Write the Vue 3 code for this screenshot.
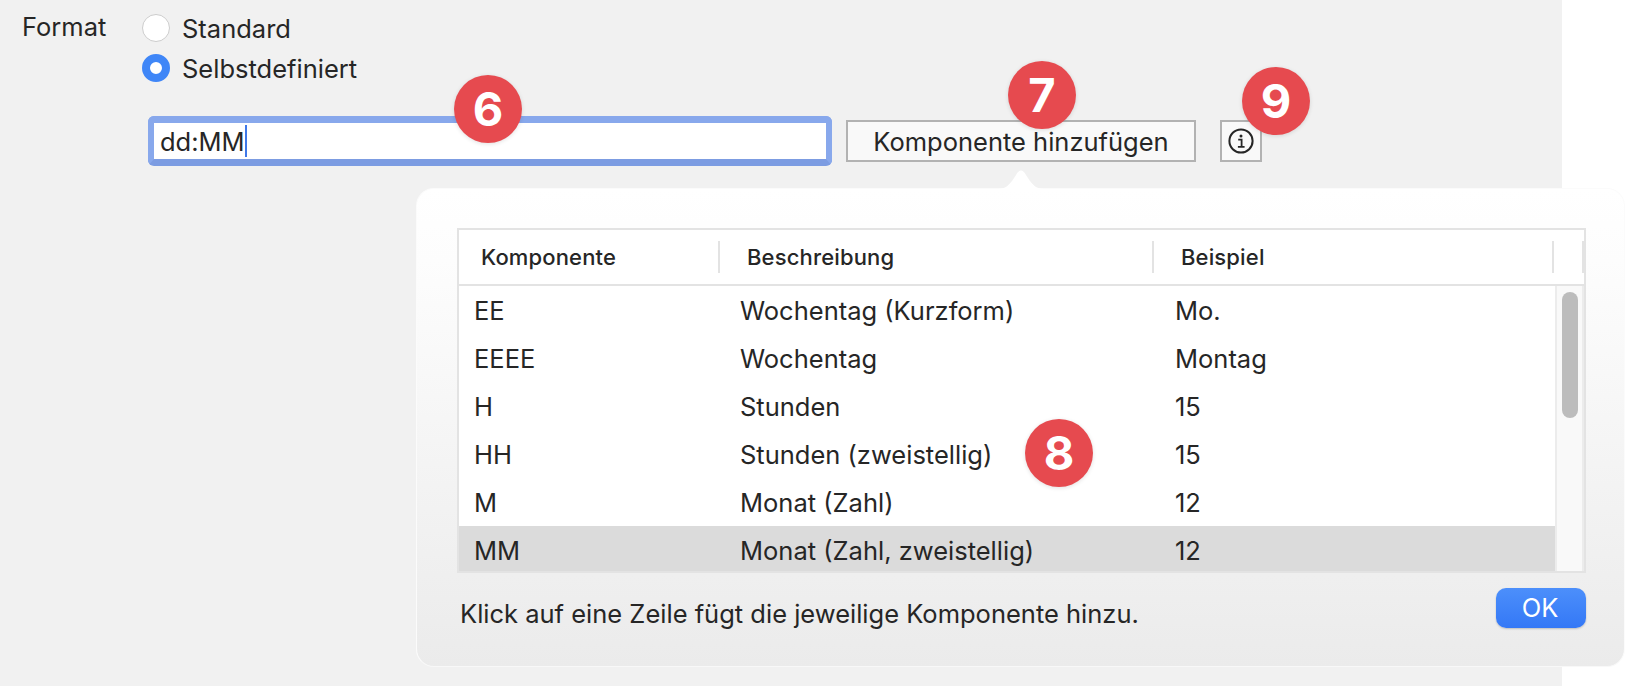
<script setup>
const rows = [
  { k: 'EE', d: 'Wochentag (Kurzform)', e: 'Mo.' },
  { k: 'EEEE', d: 'Wochentag', e: 'Montag' },
  { k: 'H', d: 'Stunden', e: '15' },
  { k: 'HH', d: 'Stunden (zweistellig)', e: '15' },
  { k: 'M', d: 'Monat (Zahl)', e: '12' },
  { k: 'MM', d: 'Monat (Zahl, zweistellig)', e: '12', sel: true },
]
</script>

<template>
  <div class="page">
    <div class="panel">
      <div class="format">
        <span class="label">Format</span>
        <div class="options">
          <div class="option"><span class="radio"></span>Standard</div>
          <div class="option"><span class="radio on"></span>Selbstdefiniert</div>
        </div>
      </div>
      <div class="controls">
        <div class="input"><span>dd:MM</span><i class="caret"></i></div>
        <button class="btn add">Komponente hinzufügen</button>
        <button class="btn info" aria-label="Info">
          <svg width="26" height="26" viewBox="0 0 26 26" fill="none" stroke="#262626">
            <circle cx="13" cy="13" r="11.6" stroke-width="2" />
            <circle cx="13" cy="7.9" r="1.5" fill="#262626" stroke="none" />
            <path d="M10.2 11.6H13.6V18.6M9.9 18.8H16.6" stroke-width="1.8" />
          </svg>
        </button>
      </div>
    </div>

    <div class="popover">
      <svg class="arrow" width="48" height="20" viewBox="0 0 48 20"><path d="M0 20C8 20 11 17 15 12L19 6C22 0 26 0 29 6L33 12C37 17 40 20 48 20Z" fill="#fff" /></svg>
      <div class="table">
        <div class="head">
          <div class="hcell c1">Komponente</div>
          <div class="hcell c2">Beschreibung</div>
          <div class="hcell c3">Beispiel</div>
          <div class="hcell c4"></div>
        </div>
        <div class="body">
          <div class="rows">
            <div v-for="r in rows" :key="r.k" class="row" :class="{ sel: r.sel }">
              <span class="b1">{{ r.k }}</span>
              <span class="b2">{{ r.d }}</span>
              <span class="b3">{{ r.e }}</span>
            </div>
          </div>
          <div class="scroll"><div class="thumb"></div></div>
        </div>
      </div>
      <div class="foot">
        <span class="hint">Klick auf eine Zeile fügt die jeweilige Komponente hinzu.</span>
        <button class="ok">OK</button>
      </div>
    </div>

    <span class="badge b6">6</span>
    <span class="badge b7">7</span>
    <span class="badge b8">8</span>
    <span class="badge b9">9</span>
  </div>
</template>

<style>
html, body { margin: 0; background: #fff; }
</style>

<style scoped>
.page {
  position: relative;
  width: 1642px;
  height: 686px;
  overflow: hidden;
  background: #fff;
  font-family: Inter, "Liberation Sans", sans-serif;
  font-size: 25.5px;
  color: #262626;
}
.panel {
  width: 1562px;
  height: 686px;
  background: #f1f1f1;
  box-sizing: border-box;
  padding: 8px 0 0 22px;
}
.format { display: flex; }
.label { width: 120px; line-height: 38px; }
.options { display: flex; flex-direction: column; }
.option { display: flex; align-items: center; gap: 12px; height: 40px; }
.radio {
  width: 28px;
  height: 28px;
  border-radius: 50%;
  box-sizing: border-box;
  background: #fff;
  border: 1px solid #cdcdcd;
}
.radio.on {
  border: 8px solid #3f86f7;
  background: #fff;
}
.controls { display: flex; align-items: center; margin: 28px 0 0 126px; }
.input {
  width: 684px;
  height: 50px;
  box-sizing: border-box;
  border: 7px solid #88a8ec;
  border-width: 7px 6px;
  border-bottom-color: #7c9ce2;
  border-radius: 6px;
  background: #fff;
  display: flex;
  align-items: center;
  padding-left: 6px;
}
.caret { width: 2px; height: 32px; background: #3f78e8; }
.btn {
  font: inherit;
  color: inherit;
  height: 42px;
  box-sizing: border-box;
  border: 2px solid #b2b2b2;
  background: #f9f9f9;
  padding: 0;
  display: flex;
  align-items: center;
  justify-content: center;
}
.add { width: 350px; margin-left: 14px; }
.info { width: 42px; margin-left: 24px; }
.popover {
  position: absolute;
  left: 416px;
  top: 188px;
  width: 1209px;
  height: 479px;
  box-sizing: border-box;
  padding: 39px 38px 0 40px;
  border-radius: 18px;
  background: linear-gradient(#ffffff 0%, #fdfdfd 15%, #ebebeb 100%);
  border: 1px solid #fbfbfb;
  border-bottom-color: #f8f8f8;
}
.arrow { position: absolute; left: 580px; top: -20px; }
.table {
  height: 345px;
  box-sizing: border-box;
  border: 2px solid #e3e3e3;
  background: #fff;
  overflow: hidden;
}
.head {
  display: flex;
  height: 56px;
  box-sizing: border-box;
  border-bottom: 2px solid #e3e3e3;
  align-items: center;
  font-size: 22px;
  font-weight: 500;
  letter-spacing: 0.15px;
}
.hcell { height: 32px; line-height: 32px; box-sizing: border-box; padding-left: 22px; border-right: 2px solid #e3e3e3; }
.c1 { width: 261px; }
.c2 { width: 434px; padding-left: 27px; }
.c3 { width: 400px; padding-left: 27px; }
.c4 { width: 30px; padding: 0; }
.body { display: flex; height: 289px; }
.rows { flex: 1; min-width: 0; }
.row { display: flex; align-items: center; height: 48px; box-sizing: border-box; }
.row.sel { background: #dbdbdb; }
.b1 { width: 281px; padding-left: 15px; box-sizing: border-box; }
.b2 { width: 435px; }
.scroll {
  width: 29px;
  box-sizing: border-box;
  border-left: 2px solid #ececec;
  border-right: 2px solid #ececec;
  background: #f9f9f9;
  padding: 6px 0 0 5px;
}
.thumb { width: 16px; height: 126px; border-radius: 8px; background: #bcbcbc; }
.foot { display: flex; justify-content: space-between; align-items: flex-start; margin-top: 15px; padding-left: 3px; }
.hint { margin-top: 10px; }
.ok {
  width: 90px;
  height: 40px;
  border: 0;
  border-radius: 10px;
  background: linear-gradient(#4c8ffb, #3478f6);
  box-shadow: 0 1px 2px rgba(0, 0, 0, 0.2);
  color: #fff;
  font: inherit;
  padding: 0 2px 2px 0;
}
.badge {
  position: absolute;
  width: 68px;
  height: 68px;
  border-radius: 50%;
  background: #e64a4f;
  color: #fff;
  font-weight: 700;
  font-size: 47px;
  line-height: 68px;
  text-align: center;
  box-shadow: 0 1px 4px rgba(0, 0, 0, 0.12);
}
.b6 { left: 454px; top: 75px; }
.b7 { left: 1008px; top: 61px; }
.b8 { left: 1025px; top: 419px; }
.b9 { left: 1242px; top: 67px; }
</style>
